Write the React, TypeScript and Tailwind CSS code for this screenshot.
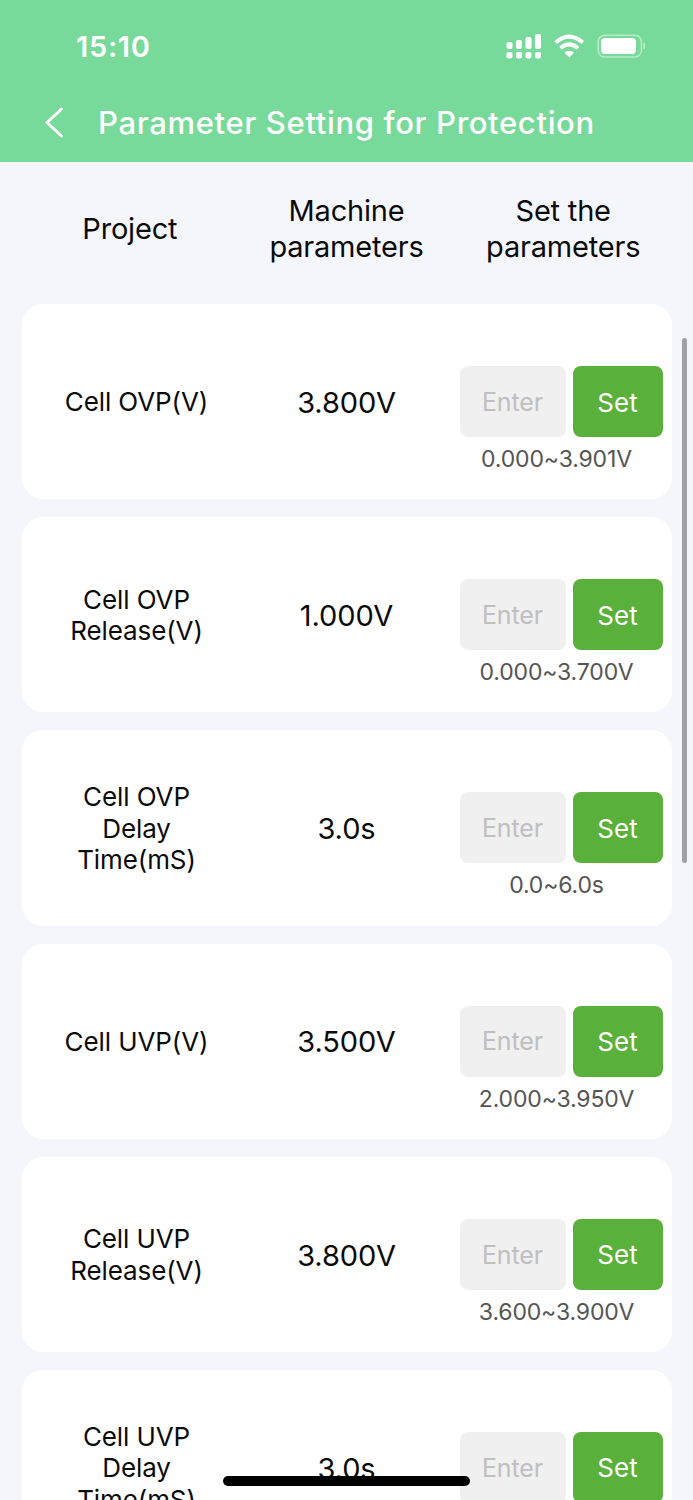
interface Parameter {
  name: string[];
  value: string;
  range: string;
}

const parameters: Parameter[] = [
  { name: ["Cell OVP(V)"], value: "3.800V", range: "0.000~3.901V" },
  { name: ["Cell OVP", "Release(V)"], value: "1.000V", range: "0.000~3.700V" },
  { name: ["Cell OVP", "Delay", "Time(mS)"], value: "3.0s", range: "0.0~6.0s" },
  { name: ["Cell UVP(V)"], value: "3.500V", range: "2.000~3.950V" },
  { name: ["Cell UVP", "Release(V)"], value: "3.800V", range: "3.600~3.900V" },
  { name: ["Cell UVP", "Delay", "Time(mS)"], value: "3.0s", range: "0.0~6.0s" },
];

function StatusIcons() {
  return (
    <svg width="142" height="30" viewBox="0 0 142 30" fill="none">
      <g fill="#fff">
        <rect x="3.5" y="11" width="6" height="7" rx="2" />
        <rect x="13" y="9" width="6" height="9" rx="2" />
        <rect x="22.5" y="6" width="6" height="12" rx="2" />
        <rect x="32" y="3" width="6" height="15" rx="2" />
        <rect x="3.5" y="21" width="6" height="6.5" rx="2" />
        <rect x="13" y="21" width="6" height="6.5" rx="2" />
        <rect x="22.5" y="21" width="6" height="6.5" rx="2" />
        <rect x="32" y="21" width="6" height="6.5" rx="2" />
      </g>
      <path d="M52.7 11.5Q66 -0.4 79.8 11.5" stroke="#fff" strokeWidth="4" />
      <path d="M57.5 17.3Q66.2 9.5 75 17.3" stroke="#fff" strokeWidth="4" />
      <path d="M61.5 21.8Q66.3 17.5 71 21.8L66.3 26.5Z" fill="#fff" />
      <rect
        x="95.2"
        y="4.2"
        width="43.2"
        height="21.8"
        rx="6.5"
        stroke="#fff"
        strokeOpacity="0.45"
        strokeWidth="1.6"
      />
      <rect x="98" y="7" width="35" height="16" rx="4" fill="#fff" />
      <path
        d="M140.3 11.5Q143 12.5 143 15T140.3 18.5Z"
        fill="#fff"
        fillOpacity="0.5"
      />
    </svg>
  );
}

function Header() {
  return (
    <header className="h-[162px] shrink-0 bg-[#78da9a] text-white">
      <div className="flex h-[92px] items-center justify-between pl-[76px] pr-[48px]">
        <span className="pt-[2px] text-[29px] font-semibold tracking-[0.7px]">
          15:10
        </span>
        <StatusIcons />
      </div>
      <div className="flex h-[61px] items-center pl-[43px]">
        <svg width="24" height="34" viewBox="0 0 24 34" fill="none">
          <path
            d="M18.5 3L4 16.5L18.5 30"
            stroke="#fff"
            strokeWidth="3"
            strokeLinecap="round"
            strokeLinejoin="round"
          />
        </svg>
        <h1 className="ml-[31px] whitespace-nowrap pt-[2px] text-[31px] font-medium tracking-[0.66px]">
          Parameter Setting for Protection
        </h1>
      </div>
    </header>
  );
}

function ParameterCard({ name, value, range }: Parameter) {
  return (
    <div className="grid h-[195.2px] shrink-0 grid-cols-3 rounded-[21px] bg-white px-[10px]">
      <div className="flex flex-col items-center justify-center pt-px text-[26px] leading-[31.6px] tracking-[-0.1px]">
        {name.map((line) => (
          <span key={line}>{line}</span>
        ))}
      </div>
      <div className="flex items-center justify-center pt-[2px] text-[29px] tracking-[-0.1px]">
        {value}
      </div>
      <div className="pt-[62px]">
        <div className="-mr-px flex h-[71px] justify-between pl-[8px]">
          <input
            placeholder="Enter"
            className="w-[106px] rounded-[8px] bg-[#f0f0f0] pt-[2px] text-center text-[25px] tracking-[-0.1px] placeholder:text-[#bfbfbf]"
          />
          <button className="w-[90px] rounded-[8px] bg-[#59b03b] pt-px text-[26px] text-white">
            Set
          </button>
        </div>
        <p className="mt-[7px] text-center text-[23px] leading-[30px] tracking-[-0.15px] text-[#555]">
          {range}
        </p>
      </div>
    </div>
  );
}

export default function App() {
  return (
    <div className="relative flex h-[1500px] w-[693px] flex-col overflow-hidden bg-[#f5f6fb] font-['Inter',sans-serif] text-[#0b0b0b]">
      <Header />
      <div className="grid h-[142px] shrink-0 grid-cols-3 px-[21.5px] pb-[8px] text-center text-[29px] leading-[36px] tracking-[-0.2px]">
        <div className="flex items-center justify-center">Project</div>
        <div className="flex items-center justify-center">
          Machine
          <br />
          parameters
        </div>
        <div className="flex items-center justify-center">
          Set the
          <br />
          parameters
        </div>
      </div>
      <main className="flex flex-col gap-[18px] px-[21.5px]">
        {parameters.map((item) => (
          <ParameterCard key={item.name.join(" ")} {...item} />
        ))}
      </main>

      {/* scroll indicator and home bar */}
      <div className="absolute right-[6px] top-[338px] h-[525px] w-[5px] rounded-full bg-[#9fa0a4]" />
      <div className="absolute left-[223px] top-[1476px] h-[10px] w-[247px] rounded-full bg-black" />
    </div>
  );
}
